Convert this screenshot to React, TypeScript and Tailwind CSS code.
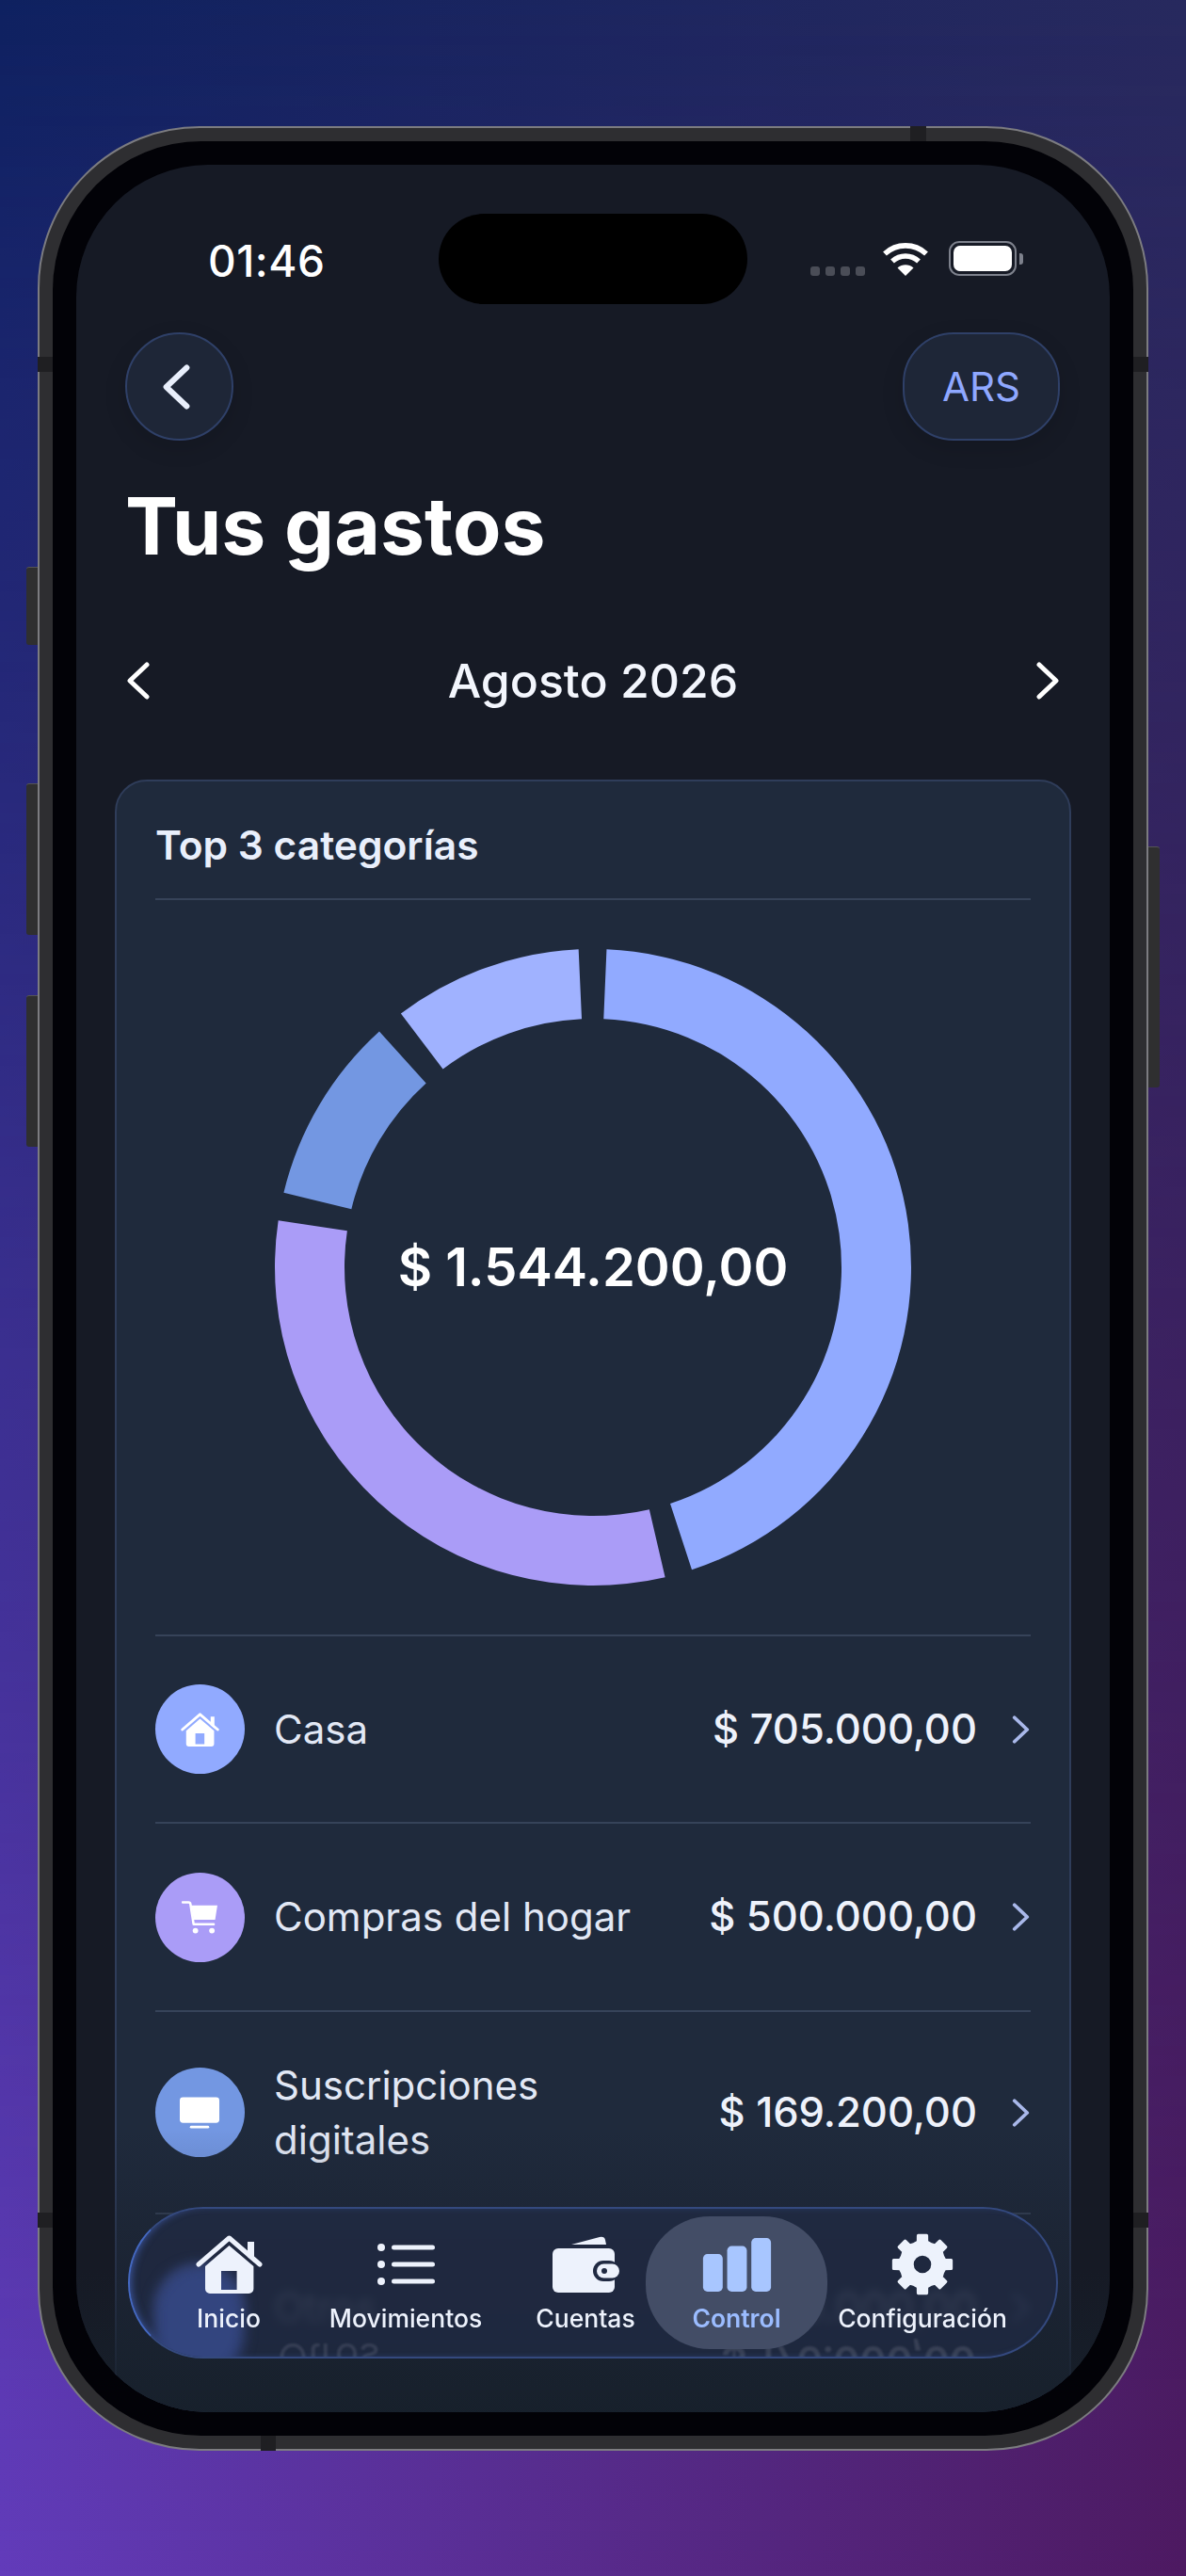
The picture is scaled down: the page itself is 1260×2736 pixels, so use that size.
const polar = (deg: number, r: number) => {
  const a = (deg * Math.PI) / 180;
  return `${(338 + r * Math.sin(a)).toFixed(2)} ${(338 - r * Math.cos(a)).toFixed(2)}`;
};

// ring slice, angles clockwise from the top
const slice = (from: number, to: number) => {
  const big = to - from > 180 ? 1 : 0;
  return `M${polar(from, 338)} A338 338 0 ${big} 1 ${polar(to, 338)} L${polar(to, 264)} A264 264 0 ${big} 0 ${polar(from, 264)} Z`;
};

const segments = [
  { from: 2.45, to: 161.9, color: "#91aaff" },
  { from: 166.9, to: 278.45, color: "#aa9cf7" },
  { from: 283.55, to: 317.8, color: "#7397e2" },
  { from: 322.85, to: 357.4, color: "#a0b2ff" },
];

const gearPath = () => {
  const pts: string[] = [];
  for (let i = 0; i < 8; i++) {
    const c = i * 45;
    [
      [c - 23, 22.5],
      [c - 11, 23.5],
      [c - 8.5, 30],
      [c + 8.5, 30],
      [c + 11, 23.5],
      [c + 23, 22.5],
    ].forEach(([deg, r]) => {
      const a = (deg * Math.PI) / 180;
      pts.push(`${(32 + r * Math.sin(a)).toFixed(2)} ${(32 - r * Math.cos(a)).toFixed(2)}`);
    });
  }
  return `M${pts.join("L")}Z`;
};

function Chevron({ dir, className, width = 5 }: { dir: "left" | "right"; className: string; width?: number }) {
  return (
    <svg viewBox="0 0 24 40" fill="none" className={className}>
      <path
        d={dir === "left" ? "M21 3 3 20l18 17" : "M3 3l18 17L3 37"}
        stroke="currentColor"
        strokeWidth={width}
        strokeLinecap="round"
        strokeLinejoin="round"
      />
    </svg>
  );
}

function HouseIcon({ className }: { className: string }) {
  return (
    <svg viewBox="0 0 71 62" className={className} fill="currentColor">
      <path
        fillRule="evenodd"
        d="M35.5 11 61.4 33v24a5 5 0 0 1-5 5H15a5 5 0 0 1-5-5V33ZM27 38v20h16.6V38Z"
      />
      <path d="M3 31 35.5 3 68 31" fill="none" stroke="currentColor" strokeWidth="5" strokeLinecap="round" strokeLinejoin="round" />
      <path d="M55 7h7v22l-7-6Z" />
    </svg>
  );
}

function ListIcon({ className }: { className: string }) {
  return (
    <svg viewBox="0 0 61 44" className={className} fill="currentColor">
      <circle cx="4" cy="4" r="4" />
      <circle cx="4" cy="22" r="4" />
      <circle cx="4" cy="40" r="4" />
      <rect x="15" y="1.5" width="46" height="5" rx="2.5" />
      <rect x="15" y="19.5" width="46" height="5" rx="2.5" />
      <rect x="15" y="37.5" width="46" height="5" rx="2.5" />
    </svg>
  );
}

function WalletIcon({ className }: { className: string }) {
  return (
    <svg viewBox="0 0 71 60" className={className} fill="currentColor">
      <path d="M20 9 50 1q5-1 6 3l1 5Z" />
      <rect x="0" y="13" width="66" height="47" rx="6" />
      <rect x="43" y="26" width="28" height="22" rx="11" fill="#202a42" />
      <rect x="47" y="29.5" width="24" height="15" rx="7.5" />
      <circle cx="55" cy="37" r="3" fill="#202a42" />
    </svg>
  );
}

function GearIcon({ className }: { className: string }) {
  return (
    <svg viewBox="0 0 64 64" className={className} fill="currentColor">
      <path
        fillRule="evenodd"
        stroke="currentColor"
        strokeWidth="3"
        strokeLinejoin="round"
        d={`${gearPath()}M32 21.5a10.5 10.5 0 1 0 0 21a10.5 10.5 0 1 0 0-21Z`}
      />
    </svg>
  );
}

function BarsIcon({ className }: { className: string }) {
  return (
    <svg viewBox="0 0 76 60" className={className} fill="currentColor">
      <rect x="0" y="18" width="22" height="42" rx="5" />
      <rect x="27" y="9" width="22" height="51" rx="5" />
      <rect x="54" y="0" width="22" height="60" rx="5" />
    </svg>
  );
}

function CartIcon({ className }: { className: string }) {
  return (
    <svg viewBox="0 0 40 36" className={className} fill="currentColor">
      <path d="M1 1.5h6.5a2 2 0 0 1 2 1.7L13 25.5h22" fill="none" stroke="currentColor" strokeWidth="2.6" strokeLinecap="round" strokeLinejoin="round" />
      <path d="M10.5 5H39l-2.5 15.5H13Z" />
      <circle cx="15" cy="32.5" r="3" />
      <circle cx="33" cy="32.5" r="3" />
    </svg>
  );
}

function ScreenIcon({ className }: { className: string }) {
  return (
    <svg viewBox="0 0 44 34" className={className} fill="currentColor">
      <rect x="0" y="0" width="43" height="28" rx="3.5" />
      <rect x="11" y="31" width="21" height="3" rx="1.5" />
    </svg>
  );
}

function WifiIcon({ className }: { className: string }) {
  return (
    <svg viewBox="0 0 50 37" className={className} fill="none" stroke="currentColor" strokeWidth="5.6">
      <path d="M3 13.5c12.5-11.5 31.5-11.5 44 0" />
      <path d="M11 21.5c8-7.3 20-7.3 28 0" />
      <path d="M25 37 16.5 28.5c5-4.2 12-4.2 17 0Z" fill="currentColor" stroke="none" />
    </svg>
  );
}

const rows = [
  { name: "Casa", amount: "$ 705.000,00", color: "bg-[#91aaff]", height: "h-[199px]", Icon: HouseIcon, iconClass: "w-[41px] h-[36px]" },
  { name: "Compras del hogar", amount: "$ 500.000,00", color: "bg-[#aa9cf7]", height: "h-[200px]", Icon: CartIcon, iconClass: "w-[39px] h-[35px]" },
  { name: "Suscripciones digitales", amount: "$ 169.200,00", color: "bg-[#7397e2]", height: "h-[215px]", Icon: ScreenIcon, iconClass: "w-[43px] h-[34px]" },
  { name: "Otros", amount: "$ 170.000,00", color: "bg-[#8c9bf5]", height: "h-[200px]", Icon: ScreenIcon, iconClass: "w-[43px] h-[34px]" },
];

const tabs = [
  { label: "Inicio", width: "w-[122px]", Icon: HouseIcon, iconClass: "w-[71px] h-[62px]" },
  { label: "Movimientos", width: "w-[254px]", Icon: ListIcon, iconClass: "w-[61px] h-[44px]" },
  { label: "Cuentas", width: "w-[128px]", Icon: WalletIcon, iconClass: "w-[71px] h-[60px]" },
  { label: "Control", width: "w-[193px]", Icon: BarsIcon, iconClass: "w-[76px] h-[57px]", active: true },
  { label: "Configuración", width: "w-[202px]", Icon: GearIcon, iconClass: "w-[66px] h-[66px]" },
];

export default function App() {
  return (
    <div className="relative w-[1260px] h-[2736px] overflow-hidden pl-[40px] pt-[134px] font-[Inter,sans-serif] bg-linear-to-r from-[#633cbb] to-[#4e1a62]">
      {/* Background */}
      <div className="absolute inset-0 bg-linear-to-r from-[#0e2160] to-[#27295e] [mask-image:linear-gradient(to_bottom,black,transparent)]" />

      {/* Side buttons */}
      <div className="absolute left-[28px] top-[602px] w-[14px] h-[83px] rounded-l-[3px] bg-[#2f2f30] border-t border-[#555]" />
      <div className="absolute left-[28px] top-[832px] w-[14px] h-[161px] rounded-l-[3px] bg-[#2f2f30] border-t border-[#555]" />
      <div className="absolute left-[28px] top-[1057px] w-[14px] h-[161px] rounded-l-[3px] bg-[#2f2f30] border-t border-[#555]" />
      <div className="absolute left-[1218px] top-[899px] w-[14px] h-[256px] rounded-r-[3px] bg-[#2f2f30] border-t border-[#555]" />

      {/* Phone */}
      <div className="relative w-[1180px] h-[2469px] rounded-[172px] border-2 border-[#7c7c80] bg-[#2e2e31] p-[14px]">
        <div className="w-full h-full rounded-[158px] bg-[#020207] p-[25px]">
          <div className="relative w-full h-full rounded-[140px] overflow-hidden bg-[#161a25] text-white">
            {/* Status bar */}
            <div className="relative flex justify-between items-start h-[178px] pt-[74px] pl-[140px] pr-[92px]">
              <p className="text-[46px] leading-[56px] font-[550] tracking-[0.5px]">01:46</p>
              <div className="absolute left-[385px] top-[52px] w-[328px] h-[96px] rounded-[48px] bg-black" />
              <div className="flex items-end mt-[7px]">
                <div className="flex gap-[6px]">
                  {[0, 1, 2, 3].map((i) => (
                    <span key={i} className="w-[10px] h-[10px] rounded-[3px] bg-[#4a4d57]" />
                  ))}
                </div>
                <WifiIcon className="ml-[18px] w-[50px] h-[37px] text-white" />
                <div className="ml-[21px] flex items-center">
                  <div className="w-[72px] h-[37px] rounded-[11px] border-2 border-[#7d818c] p-[3px]">
                    <div className="w-full h-full rounded-[7px] bg-white" />
                  </div>
                  <div className="ml-[3px] w-[4px] h-[12px] rounded-r-[3px] bg-[#7d818c]" />
                </div>
              </div>
            </div>

            {/* Header */}
            <div className="flex justify-between pl-[52px] pr-[53px]">
              <button className="flex items-center justify-center w-[115px] h-[115px] rounded-full bg-[#1e2637] border-2 border-[#2f4068] shadow-[0_8px_24px_rgba(0,0,0,0.12)] text-[#e9effc]">
                <Chevron dir="left" className="w-[29px] h-[50px] mr-[6px]" />
              </button>
              <button className="w-[167px] h-[115px] rounded-[54px] bg-[#1e2637] border-2 border-[#2f4068] shadow-[0_8px_24px_rgba(0,0,0,0.12)] text-[42px] text-[#8fa8ff]">
                ARS
              </button>
            </div>

            <h1 className="mt-[41px] px-[52px] text-[84px] leading-[100px] font-bold">Tus gastos</h1>

            {/* Month switcher */}
            <div className="mt-[84px] flex items-center justify-between pl-[54px] pr-[54px] h-[60px]">
              <Chevron dir="left" className="w-[24px] h-[40px]" />
              <p className="text-[50px] leading-[60px] font-[550] text-[#f3f6fd]">Agosto 2026</p>
              <Chevron dir="right" className="w-[24px] h-[40px]" />
            </div>

            {/* Card */}
            <section className="mt-[75px] mx-[41px] h-[1800px] rounded-[34px] border-2 border-[#2f3d5a] bg-[#1f2a3c] px-[41px]">
              <h2 className="pt-[43px] h-[126px] border-b-2 border-[#364359] text-[42.5px] leading-[50px] font-semibold text-[#e9effb]">
                Top 3 categorías
              </h2>

              <div className="relative mt-[52px] mb-[52px] mx-auto w-[676px] h-[676px]">
                <svg viewBox="0 0 676 676" className="w-full h-full">
                  {segments.map((s) => (
                    <path key={s.from} d={slice(s.from, s.to)} fill={s.color} />
                  ))}
                </svg>
                <p className="absolute inset-0 flex items-center justify-center text-[56px] font-semibold">$ 1.544.200,00</p>
              </div>

              {rows.map(({ name, amount, color, height, Icon, iconClass }) => (
                <div key={name} className={`flex items-center border-t-2 border-[#364359] ${height}`}>
                  <div className={`flex items-center justify-center shrink-0 w-[95px] h-[95px] rounded-full text-white ${color}`}>
                    <Icon className={iconClass} />
                  </div>
                  <p className="ml-[31px] w-[400px] text-[42px] leading-[58px] text-[#e2e8f5]">{name}</p>
                  <p className="ml-auto text-[43.5px] font-[550] text-[#eef2fb]">{amount}</p>
                  <Chevron dir="right" className="ml-[37px] mr-[1px] w-[19px] h-[30px] text-[#a9b8ea]" width={5} />
                </div>
              ))}
            </section>

            {/* Fade under the tab bar */}
            <div className="absolute inset-x-0 bottom-0 h-[300px] bg-linear-to-b from-[#161a2500] via-[#161a2560] to-[#17202bf5] z-10" />

            {/* Tab bar */}
            <nav className="absolute z-20 left-[55px] top-[2169px] w-[988px] h-[161px] rounded-[80px] border-2 border-[#34497e] border-l-[#4468c0] bg-[#202a42d0] backdrop-blur-[5px] shadow-[inset_5px_0_8px_-4px_rgba(70,100,190,0.8)] flex items-center pl-[44px]">
              {/* Glass refraction of what scrolls underneath */}
              <div className="absolute inset-0 rounded-[78px] overflow-hidden" aria-hidden="true">
                <div className="absolute left-[26px] top-[60px] w-[95px] h-[120px] rounded-full bg-[#33457f] blur-[7px]" />
                <p className="absolute left-[157px] top-[133px] -scale-y-100 text-[42px] leading-[50px] text-[#e2e8f5] opacity-[0.12] blur-[1px]">Otros</p>
                <p className="absolute left-[628px] top-[136px] -scale-y-100 text-[42.5px] leading-[50px] font-semibold text-[#eef2fb] opacity-[0.12] blur-[1px]">$ 170.000,00</p>
              </div>
              {tabs.map(({ label, width, Icon, iconClass, active }) => (
                <div
                  key={label}
                  className={`relative flex flex-col items-center h-[141px] ${width} ${active ? "rounded-[68px] bg-[#434d66] text-[#a8c6ff]" : "text-[#edf2fc]"}`}
                >
                  <div className="flex items-center justify-center h-[62px] mt-[20px]">
                    <Icon className={iconClass} />
                  </div>
                  <span className={`mt-[10px] text-[26.5px] leading-[32px] whitespace-nowrap ${active ? "text-[#9bbcff] font-semibold" : "font-medium"}`}>{label}</span>
                </div>
              ))}
            </nav>
          </div>
        </div>
      </div>

      {/* Antenna bands on the frame */}
      <div className="absolute left-[40px] top-[379px] w-[16px] h-[16px] bg-[#1f1f22]" />
      <div className="absolute left-[1204px] top-[379px] w-[16px] h-[16px] bg-[#1f1f22]" />
      <div className="absolute left-[967px] top-[134px] w-[17px] h-[16px] bg-[#1f1f22]" />
      <div className="absolute left-[277px] top-[2587px] w-[16px] h-[16px] bg-[#1f1f22]" />
      <div className="absolute left-[40px] top-[2350px] w-[16px] h-[16px] bg-[#1f1f22]" />
      <div className="absolute left-[1204px] top-[2350px] w-[16px] h-[16px] bg-[#1f1f22]" />
    </div>
  );
}
